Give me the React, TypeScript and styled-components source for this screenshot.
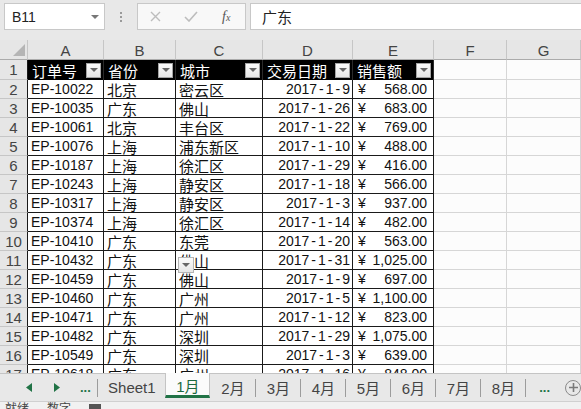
import React from 'react';
import styled, { createGlobalStyle } from 'styled-components';

const Global = createGlobalStyle`
  html, body { margin: 0; padding: 0; overflow: hidden; background: #e8e8e8; }
  body { font-family: "Liberation Sans", "Noto Sans CJK SC", sans-serif; }
  * { box-sizing: border-box; }
`;

const Window = styled.div`
  width: 581px;
  height: 409px;
  display: flex;
  flex-direction: column;
  overflow: hidden;
  background: #e8e8e8;
`;

/* ---------- formula bar ---------- */
const FormulaBar = styled.div`
  height: 40px;
  flex-shrink: 0;
  display: flex;
  align-items: flex-start;
  padding-top: 3px;
`;

const NameBox = styled.div`
  margin-left: 4px;
  width: 101px;
  height: 27px;
  background: #fff;
  border: 1px solid #c8c8c8;
  display: flex;
  align-items: center;
  justify-content: space-between;
  padding: 0 5px 0 7px;
  font-size: 14px;
  color: #222;
`;

const Caret = styled.span`
  width: 0;
  height: 0;
  border-left: 4px solid transparent;
  border-right: 4px solid transparent;
  border-top: 4px solid #777;
`;

const Grip = styled.div`
  width: 32px;
  height: 27px;
  display: flex;
  flex-direction: column;
  align-items: center;
  justify-content: center;
  gap: 2px;
`;

const GripDot = styled.span`
  width: 2px;
  height: 2px;
  background: #9a9a9a;
`;

const FxBox = styled.div`
  width: 109px;
  height: 27px;
  background: #f8f8f8;
  border: 1px solid #c8c8c8;
  display: flex;
  align-items: center;
  padding-left: 12px;
  gap: 18px;
`;

const FxLabel = styled.span`
  font-family: "Liberation Serif", "DejaVu Serif", serif;
  font-style: italic;
  font-size: 14px;
  color: #555;
  margin-left: 6px;
`;

const Fx = styled.span`
  font-size: 10px;
`;

const FormulaInput = styled.div`
  margin-left: 4px;
  flex: 1;
  height: 27px;
  background: #fff;
  border: 1px solid #c8c8c8;
  border-right: none;
  display: flex;
  align-items: center;
  padding-left: 11px;
  font-size: 15px;
  color: #222;
`;

/* ---------- sheet ---------- */
const Sheet = styled.div`
  flex: 1;
  min-height: 0;
  overflow: hidden;
  position: relative;
  display: grid;
  grid-template-columns: 28px 76px 72px 87px 90px 81px 73px 1fr;
  grid-template-rows: 20px 20px;
  grid-auto-rows: 19px;
  background: #fff;
`;

const Corner = styled.div`
  background: #e6e6e6;
  border-right: 1px solid #c6c6c6;
  border-bottom: 1px solid #ababab;
  display: flex;
  align-items: flex-end;
  justify-content: flex-end;
  padding: 0 2px 3px 0;
`;

const ColHead = styled.div`
  background: #e6e6e6;
  border-right: 1px solid #c6c6c6;
  border-bottom: 1px solid #ababab;
  display: flex;
  align-items: center;
  justify-content: center;
  font-size: 15px;
  color: #444;
  padding-top: 1px;
`;

const RowHead = styled.div`
  background: #e6e6e6;
  border-right: 1px solid #1a1a1a;
  border-bottom: 1px solid #c6c6c6;
  display: flex;
  align-items: center;
  justify-content: center;
  font-size: 15px;
  color: #444;
`;

const Cell = styled.div<{ $align?: 'left' | 'right'; $latin?: boolean }>`
  border-right: 1px solid #1a1a1a;
  border-bottom: 1px solid #1a1a1a;
  display: flex;
  align-items: center;
  justify-content: ${p => (p.$align === 'right' ? 'flex-end' : 'flex-start')};
  padding: 0 2px 0 3px;
  font-size: ${p => (p.$latin ? '14px' : '15px')};
  color: #111;
  white-space: nowrap;
  overflow: hidden;
`;

const Dash = styled.span`
  margin: 0 2px;
`;

const MoneyCell = styled(Cell)`
  justify-content: space-between;
  padding: 0 6px 0 5px;
`;

const EmptyCell = styled.div`
  border-right: 1px solid #d6d6d6;
  border-bottom: 1px solid #d6d6d6;
  background: #fcfcfc;
`;

const HeadCell = styled.div`
  background: #000;
  color: #fff;
  border-right: 1px solid #2a2a2a;
  display: flex;
  align-items: center;
  justify-content: space-between;
  padding: 0 2px 0 4px;
  font-size: 15px;
  white-space: nowrap;
`;

const FilterButton = styled.span`
  width: 15px;
  height: 15px;
  background: linear-gradient(#fafafa, #e6e6e6);
  border: 1px solid #a4a4a4;
  display: flex;
  align-items: center;
  justify-content: center;
  flex-shrink: 0;
`;

const FilterCaret = styled.span`
  width: 0;
  height: 0;
  border-left: 4px solid transparent;
  border-right: 4px solid transparent;
  border-top: 4px solid #666;
`;

const ValidationButton = styled(FilterButton)`
  position: absolute;
  left: 178px;
  top: 217px;
  width: 16px;
  height: 16px;
  border-color: #b4b4b4;
`;

/* ---------- tabs ---------- */
const TabBar = styled.div`
  height: 28px;
  flex-shrink: 0;
  display: flex;
  align-items: center;
  background: #e8e8e8;
  border-top: 1px solid #c4c4c4;
`;

const Nav = styled.div`
  width: 100px;
  height: 100%;
  display: flex;
  align-items: center;
  padding-left: 26px;
  gap: 22px;
`;

const NavDots = styled.span`
  font-size: 13px;
  font-weight: bold;
  color: #217346;
  margin-left: -2px;
`;

const Sep = styled.span`
  width: 1px;
  height: 18px;
  background: #9c9c9c;
  flex-shrink: 0;
`;

const Tab = styled.div<{ $width: number; $active?: boolean }>`
  width: ${p => p.$width}px;
  flex-shrink: 0;
  align-self: ${p => (p.$active ? 'flex-start' : 'center')};
  height: ${p => (p.$active ? '25px' : '20px')};
  margin-top: ${p => (p.$active ? '-1px' : '0')};
  display: flex;
  align-items: center;
  justify-content: center;
  font-size: 15px;
  color: ${p => (p.$active ? '#1d6a40' : '#444')};
  background: ${p => (p.$active ? '#fbfbfb' : 'transparent')};
  border-bottom: ${p => (p.$active ? '3px solid #217346' : 'none')};
  border-left: ${p => (p.$active ? '1px solid #c4c4c4' : 'none')};
  border-right: ${p => (p.$active ? '1px solid #c4c4c4' : 'none')};
  padding-top: ${p => (p.$active ? '2px' : '0')};
`;

const MoreTabs = styled.div`
  width: 38px;
  display: flex;
  justify-content: center;
  font-size: 13px;
  font-weight: bold;
  color: #217346;
`;

const AddButton = styled.div`
  width: 16px;
  height: 16px;
  border: 1.5px solid #8a8a8a;
  border-radius: 50%;
  display: flex;
  align-items: center;
  justify-content: center;
  margin-left: 2px;
  flex-shrink: 0;
`;

/* ---------- status bar ---------- */
const StatusBar = styled.div`
  height: 8px;
  flex-shrink: 0;
  overflow: hidden;
  background: #f1f1f1;
  border-top: 1px solid #d0d0d0;
  display: flex;
  align-items: flex-start;
  gap: 18px;
  padding-left: 5px;
  font-size: 12px;
  line-height: 14px;
  color: #444;
`;

const StatusIcon = styled.span`
  width: 12px;
  height: 10px;
  margin-top: 2px;
  background: #555;
`;

type Row = [string, string, string, string, string];

const rows: Row[] = [
  ['EP-10022', '北京', '密云区', '2017-1-9', '568.00'],
  ['EP-10035', '广东', '佛山', '2017-1-26', '683.00'],
  ['EP-10061', '北京', '丰台区', '2017-1-22', '769.00'],
  ['EP-10076', '上海', '浦东新区', '2017-1-10', '488.00'],
  ['EP-10187', '上海', '徐汇区', '2017-1-29', '416.00'],
  ['EP-10243', '上海', '静安区', '2017-1-18', '566.00'],
  ['EP-10317', '上海', '静安区', '2017-1-3', '937.00'],
  ['EP-10374', '上海', '徐汇区', '2017-1-14', '482.00'],
  ['EP-10410', '广东', '东莞', '2017-1-20', '563.00'],
  ['EP-10432', '广东', '佛山', '2017-1-31', '1,025.00'],
  ['EP-10459', '广东', '佛山', '2017-1-9', '697.00'],
  ['EP-10460', '广东', '广州', '2017-1-5', '1,100.00'],
  ['EP-10471', '广东', '广州', '2017-1-12', '823.00'],
  ['EP-10482', '广东', '深圳', '2017-1-29', '1,075.00'],
  ['EP-10549', '广东', '深圳', '2017-1-3', '639.00'],
  ['EP-10618', '广东', '广州', '2017-1-16', '848.00'],
];

const headers = ['订单号', '省份', '城市', '交易日期', '销售额'];
const cols = ['A', 'B', 'C', 'D', 'E', 'F', 'G'];
const tabs = ['2月', '3月', '4月', '5月', '6月', '7月', '8月'];

function DateText({ value }: { value: string }) {
  const parts = value.split('-');
  return (
    <>
      {parts.map((p, i) => (
        <React.Fragment key={i}>
          {i > 0 && <Dash>-</Dash>}
          {p}
        </React.Fragment>
      ))}
    </>
  );
}

export default function App() {
  return (
    <Window>
      <Global />
      <FormulaBar>
        <NameBox>
          B11
          <Caret />
        </NameBox>
        <Grip>
          <GripDot />
          <GripDot />
          <GripDot />
        </Grip>
        <FxBox>
          <svg width="11" height="11" viewBox="0 0 11 11">
            <path d="M1 1 L10 10 M10 1 L1 10" stroke="#bdbdbd" strokeWidth="1.4" />
          </svg>
          <svg width="14" height="11" viewBox="0 0 14 11" style={{ marginLeft: 5 }}>
            <path d="M1 6 L5 10 L13 1" stroke="#bdbdbd" strokeWidth="1.6" fill="none" />
          </svg>
          <FxLabel>
            f<Fx>x</Fx>
          </FxLabel>
        </FxBox>
        <FormulaInput>广东</FormulaInput>
      </FormulaBar>

      <Sheet>
        <Corner>
          <svg width="12" height="12" viewBox="0 0 12 12">
            <polygon points="12,0 12,12 0,12" fill="#b5b5b5" />
          </svg>
        </Corner>
        {cols.map(c => (
          <ColHead key={c}>{c}</ColHead>
        ))}

        <RowHead>1</RowHead>
        {headers.map(h => (
          <HeadCell key={h}>
            {h}
            <FilterButton>
              <FilterCaret />
            </FilterButton>
          </HeadCell>
        ))}
        <EmptyCell />
        <EmptyCell />

        {rows.map((r, i) => (
          <React.Fragment key={r[0]}>
            <RowHead>{i + 2}</RowHead>
            <Cell $latin>{r[0]}</Cell>
            <Cell>{r[1]}</Cell>
            <Cell>{r[2]}</Cell>
            <Cell $latin $align="right">
              <DateText value={r[3]} />
            </Cell>
            <MoneyCell $latin>
              <span>¥</span>
              <span>{r[4]}</span>
            </MoneyCell>
            <EmptyCell />
            <EmptyCell />
          </React.Fragment>
        ))}

        <ValidationButton>
          <FilterCaret />
        </ValidationButton>
      </Sheet>

      <TabBar>
        <Nav>
          <svg width="6" height="9" viewBox="0 0 6 9">
            <polygon points="6,0 6,9 0,4.5" fill="#217346" />
          </svg>
          <svg width="6" height="9" viewBox="0 0 6 9">
            <polygon points="0,0 0,9 6,4.5" fill="#217346" />
          </svg>
          <NavDots>...</NavDots>
        </Nav>
        <Sep />
        <Tab $width={67}>Sheet1</Tab>
        <Tab $width={45} $active>
          1月
        </Tab>
        {tabs.map((t, i) => (
          <React.Fragment key={t}>
            {i > 0 && <Sep />}
            <Tab $width={i === 0 ? 45 : 44}>{t}</Tab>
          </React.Fragment>
        ))}
        <Sep />
        <MoreTabs>...</MoreTabs>
        <AddButton>
          <svg width="9" height="9" viewBox="0 0 9 9">
            <path d="M4.5 0 V9 M0 4.5 H9" stroke="#7a7a7a" strokeWidth="1.6" />
          </svg>
        </AddButton>
      </TabBar>

      <StatusBar>
        <span>就绪</span>
        <span>数字</span>
        <StatusIcon />
      </StatusBar>
    </Window>
  );
}
